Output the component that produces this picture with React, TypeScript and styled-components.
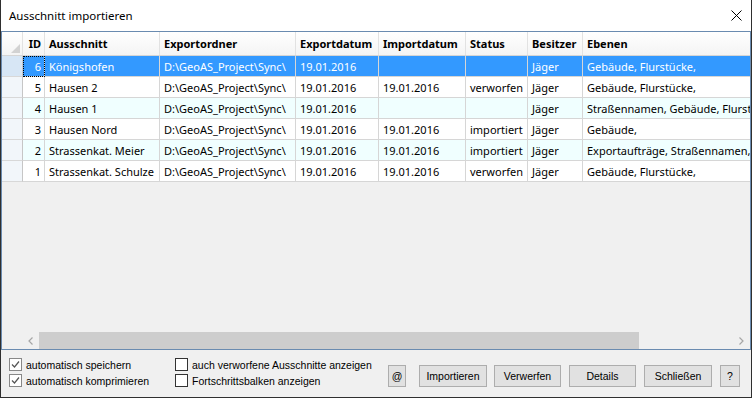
import React from "react";
import styled, { createGlobalStyle } from "styled-components";

const UI_FONT = `"Noto Sans", "Open Sans", sans-serif`;
const CLASSIC_FONT = `"Liberation Sans", Arial, sans-serif`;

type Col = { key: string; title: string; width: number; right?: boolean };

const columns: Col[] = [
  { key: "id", title: "ID", width: 22, right: true },
  { key: "name", title: "Ausschnitt", width: 115 },
  { key: "folder", title: "Exportordner", width: 136 },
  { key: "exported", title: "Exportdatum", width: 83 },
  { key: "imported", title: "Importdatum", width: 87 },
  { key: "status", title: "Status", width: 62 },
  { key: "owner", title: "Besitzer", width: 55 },
  { key: "layers", title: "Ebenen", width: 220 },
];

const FOLDER = "D:\\GeoAS_Project\\Sync\\";

const rows: Record<string, string>[] = [
  { id: "6", name: "Königshofen", folder: FOLDER, exported: "19.01.2016", imported: "", status: "", owner: "Jäger", layers: "Gebäude, Flurstücke," },
  { id: "5", name: "Hausen 2", folder: FOLDER, exported: "19.01.2016", imported: "19.01.2016", status: "verworfen", owner: "Jäger", layers: "Gebäude, Flurstücke," },
  { id: "4", name: "Hausen 1", folder: FOLDER, exported: "19.01.2016", imported: "", status: "", owner: "Jäger", layers: "Straßennamen, Gebäude, Flurstücke," },
  { id: "3", name: "Hausen Nord", folder: FOLDER, exported: "19.01.2016", imported: "19.01.2016", status: "importiert", owner: "Jäger", layers: "Gebäude," },
  { id: "2", name: "Strassenkat. Meier", folder: FOLDER, exported: "19.01.2016", imported: "19.01.2016", status: "importiert", owner: "Jäger", layers: "Exportaufträge, Straßennamen, Gebäude," },
  { id: "1", name: "Strassenkat. Schulze", folder: FOLDER, exported: "19.01.2016", imported: "19.01.2016", status: "verworfen", owner: "Jäger", layers: "Gebäude, Flurstücke," },
];

const buttons = [
  { label: "@", width: 18, gap: 0 },
  { label: "Importieren", width: 68, gap: 13 },
  { label: "Verwerfen", width: 67, gap: 7 },
  { label: "Details", width: 67, gap: 8 },
  { label: "Schließen", width: 68, gap: 8 },
  { label: "?", width: 20, gap: 8 },
];

const template = `21px ${columns.map((c) => c.width + "px").join(" ")}`;

const GlobalStyle = createGlobalStyle`
  html, body {
    margin: 0;
    padding: 0;
    background: #ffffff;
  }
`;

const Window = styled.div`
  width: 752px;
  height: 398px;
  box-sizing: border-box;
  border: 1px solid #2f2f2f;
  border-top: none;
  display: flex;
  flex-direction: column;
  background: #f0f0f0;
  overflow: hidden;
`;

const TitleBar = styled.div`
  height: 31px;
  flex: none;
  background: #ffffff;
  display: flex;
  align-items: center;
  justify-content: space-between;
  padding: 0 9px 0 8px;
  font-family: ${UI_FONT};
  font-size: 11.5px;
  color: #000;
`;

const CloseButton = styled.div`
  width: 12px;
  height: 12px;
  display: flex;
  align-items: center;
  justify-content: center;
`;

const GridFrame = styled.div`
  flex: 1;
  border: 1px solid #6a8bb0;
  display: flex;
  flex-direction: column;
  background: #f0f0f0;
  overflow: hidden;
  font-family: ${UI_FONT};
  font-size: 11px;
`;

const GridBody = styled.div`
  flex: 1;
  overflow: hidden;
`;

const HeaderRow = styled.div`
  display: grid;
  grid-template-columns: ${template};
  height: 24px;
  background: linear-gradient(#ffffff, #f4f4f4);
  border-bottom: 1px solid #d5d5d5;
  box-sizing: border-box;
`;

const HeaderCell = styled.div<{ $right?: boolean }>`
  border-right: 1px solid #e2e2e2;
  display: flex;
  align-items: center;
  justify-content: ${(p) => (p.$right ? "flex-end" : "flex-start")};
  padding: 0 3px 0 4px;
  font-weight: 700;
  white-space: nowrap;
  overflow: hidden;
  color: #000;
`;

const Corner = styled.div`
  border-right: 1px solid #e2e2e2;
  display: flex;
  align-items: flex-end;
  justify-content: flex-end;
  padding: 0 2px 2px 0;
`;

const DataRow = styled.div<{ $alt?: boolean; $selected?: boolean }>`
  display: grid;
  grid-template-columns: ${template};
  height: 21px;
  background: ${(p) => (p.$selected ? "#3399ff" : p.$alt ? "#f0ffff" : "#ffffff")};
  color: ${(p) => (p.$selected ? "#ffffff" : "#000000")};
`;

const RowHeader = styled.div<{ $selected?: boolean }>`
  box-sizing: border-box;
  border-right: 1px solid #c6c6c6;
  border-bottom: 1px solid #d8d8d8;
  background: ${(p) => (p.$selected ? "#d7e6f5" : "#f2f6fa")};
`;

const Cell = styled.div<{ $right?: boolean; $focus?: boolean }>`
  box-sizing: border-box;
  border-right: 1px solid #d6d6d6;
  border-bottom: 1px solid #d6d6d6;
  display: flex;
  align-items: center;
  justify-content: ${(p) => (p.$right ? "flex-end" : "flex-start")};
  padding: 0 3px 0 4px;
  white-space: nowrap;
  overflow: hidden;
  outline: ${(p) => (p.$focus ? "1px dotted #000" : "none")};
  outline-offset: -1px;
`;

const ScrollBar = styled.div`
  height: 17px;
  flex: none;
  margin-left: 20px;
  display: flex;
`;

const ScrollArrow = styled.div`
  width: 17px;
  flex: none;
  display: flex;
  align-items: center;
  justify-content: center;
`;

const ScrollThumb = styled.div<{ $width: number }>`
  width: ${(p) => p.$width}px;
  background: #cdcdcd;
  flex: none;
`;

const ScrollTrack = styled.div`
  flex: 1;
`;

const BottomPanel = styled.div`
  height: 47px;
  flex: none;
  display: flex;
  padding: 8px 11px 10px 8px;
  box-sizing: border-box;
  font-family: ${CLASSIC_FONT};
  font-size: 10.5px;
  color: #000;
`;

const CheckGroup = styled.div<{ $width?: number }>`
  display: flex;
  flex-direction: column;
  gap: 3px;
  width: ${(p) => (p.$width ? p.$width + "px" : "auto")};
`;

const CheckRow = styled.label`
  display: flex;
  align-items: center;
  gap: 4px;
  height: 13px;
  white-space: nowrap;
`;

const Box = styled.span<{ $checked?: boolean }>`
  width: 13px;
  height: 13px;
  box-sizing: border-box;
  border: 1px solid ${(p) => (p.$checked ? "#888888" : "#333333")};
  background: #ffffff;
  display: flex;
  align-items: center;
  justify-content: center;
  flex: none;
`;

const ButtonBar = styled.div`
  margin-left: auto;
  align-self: flex-end;
  display: flex;
`;

const Button = styled.button<{ $width: number; $gap: number }>`
  width: ${(p) => p.$width}px;
  margin-left: ${(p) => p.$gap}px;
  height: 22px;
  box-sizing: border-box;
  border: 1px solid #adadad;
  background: #e1e1e1;
  font-family: ${CLASSIC_FONT};
  font-size: 10.5px;
  color: #000;
  padding: 0;
`;

function Check({ checked, label }: { checked?: boolean; label: string }) {
  return (
    <CheckRow>
      <Box $checked={checked}>
        {checked && (
          <svg width="9" height="9" viewBox="0 0 9 9">
            <path d="M1 4.5 L3.5 7 L8 1.5" fill="none" stroke="#555" strokeWidth="1.2" />
          </svg>
        )}
      </Box>
      {label}
    </CheckRow>
  );
}

export default function App() {
  return (
    <>
      <GlobalStyle />
      <Window>
        <TitleBar>
          <span>Ausschnitt importieren</span>
          <CloseButton>
            <svg width="11" height="11" viewBox="0 0 11 11">
              <path d="M0.5 0.5 L10.5 10.5 M10.5 0.5 L0.5 10.5" stroke="#000" strokeWidth="1" />
            </svg>
          </CloseButton>
        </TitleBar>
        <GridFrame>
          <GridBody>
            <HeaderRow>
              <Corner>
                <svg width="9" height="9" viewBox="0 0 9 9">
                  <path d="M9 0 L9 9 L0 9 Z" fill="#d2d2d2" />
                </svg>
              </Corner>
              {columns.map((c) => (
                <HeaderCell key={c.key} $right={c.right}>
                  {c.title}
                </HeaderCell>
              ))}
            </HeaderRow>
            {rows.map((r, i) => (
              <DataRow key={r.id} $selected={i === 0} $alt={i % 2 === 0}>
                <RowHeader $selected={i === 0} />
                {columns.map((c) => (
                  <Cell key={c.key} $right={c.right} $focus={i === 0 && c.key === "id"}>
                    {r[c.key]}
                  </Cell>
                ))}
              </DataRow>
            ))}
          </GridBody>
          <ScrollBar>
            <ScrollArrow>
              <svg width="5" height="8" viewBox="0 0 5 8">
                <path d="M4.5 0.5 L1 4 L4.5 7.5" fill="none" stroke="#a6a6a6" strokeWidth="1.2" />
              </svg>
            </ScrollArrow>
            <ScrollThumb $width={600} />
            <ScrollTrack />
            <ScrollArrow>
              <svg width="5" height="8" viewBox="0 0 5 8">
                <path d="M0.5 0.5 L4 4 L0.5 7.5" fill="none" stroke="#a6a6a6" strokeWidth="1.2" />
              </svg>
            </ScrollArrow>
          </ScrollBar>
        </GridFrame>
        <BottomPanel>
          <CheckGroup $width={166}>
            <Check checked label="automatisch speichern" />
            <Check checked label="automatisch komprimieren" />
          </CheckGroup>
          <CheckGroup>
            <Check label="auch verworfene Ausschnitte anzeigen" />
            <Check label="Fortschrittsbalken anzeigen" />
          </CheckGroup>
          <ButtonBar>
            {buttons.map((b) => (
              <Button key={b.label} $width={b.width} $gap={b.gap}>
                {b.label}
              </Button>
            ))}
          </ButtonBar>
        </BottomPanel>
      </Window>
    </>
  );
}
